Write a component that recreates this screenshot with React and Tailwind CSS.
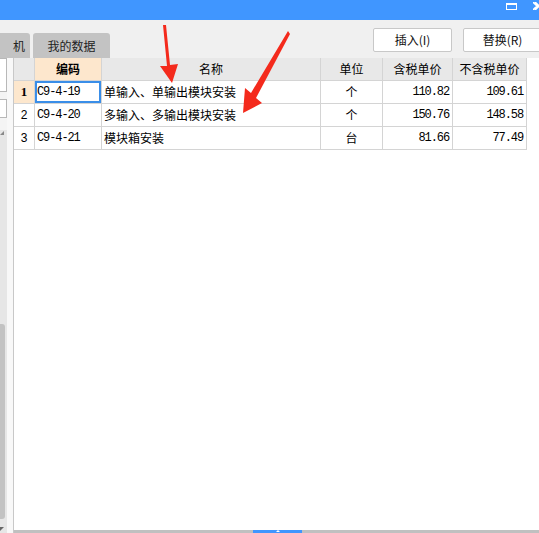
import React from "react";

const cjk = { fontFamily: '"Noto Sans CJK SC", "Liberation Sans", sans-serif' };

const rows = [
  { n: 1, code: "C9-4-19", name: "单输入、单输出模块安装", unit: "个", p1: "110.82", p2: "109.61" },
  { n: 2, code: "C9-4-20", name: "多输入、多输出模块安装", unit: "个", p1: "150.76", p2: "148.58" },
  { n: 3, code: "C9-4-21", name: "模块箱安装", unit: "台", p1: "81.66", p2: "77.49" },
];

const grid = "grid grid-cols-[21px_67px_219px_62px_70px_74px]";
const cell = "h-[23px] border-r border-b border-[#d4d4d4] flex items-center text-[12px] text-black";
const mono = "font-['Liberation_Mono',monospace] tracking-[-1.1px]";

const Arrows = () => (
  <svg className="absolute inset-0 pointer-events-none" width="539" height="533">
    <polygon
      fill="#f42a1c"
      points="163,25 166,25 170,65 178,64 172,83 160,66 167,66"
    />
    <polygon
      fill="#f42a1c"
      points="288,31 290,34 256,98 262,103 243,113 245,88 251,93"
    />
  </svg>
);

export default function App() {
  return (
    <div className="relative w-[539px] h-[533px] overflow-hidden bg-white flex flex-col" style={cjk}>
      {/* title bar */}
      <div className="h-[20px] bg-[#4096ff] flex items-start shrink-0">
        <div className="ml-auto mt-[3px] w-[11px] h-[7px] border-white border-x border-b border-t-2" />
        <svg className="ml-[16px] mt-[2px]" width="6" height="8" viewBox="0 0 6 8">
          <path d="M0 0 L4 4 L0 8 M2 0 L6 4 L2 8" stroke="#fff" strokeWidth="1.6" fill="none" />
        </svg>
      </div>

      {/* tabs + buttons */}
      <div className="h-[38px] bg-[#f0f0f0] flex items-end relative shrink-0">
        <div className="flex items-end gap-[3px] h-full">
          <div className="h-[25px] w-[30px] bg-[#c3c3c3] rounded-tr-[3px] flex items-center justify-end pr-[5px] text-[12px] text-[#222]">
            机
          </div>
          <div className="h-[25px] w-[77px] bg-[#c3c3c3] rounded-t-[3px] flex items-center justify-center text-[12px] text-[#222]">
            我的数据
          </div>
        </div>
        <div className="ml-auto self-start mt-[8px] flex gap-[11px] -mr-[3px]">
          <div className="w-[79px] h-[24px] bg-white border border-[#c8c8c8] rounded-[2px] flex items-center justify-center text-[12px] text-[#111]">
            插入(I)
          </div>
          <div className="w-[79px] h-[24px] bg-white border border-[#c8c8c8] rounded-[2px] flex items-center justify-center text-[12px] text-[#111]">
            替换(R)
          </div>
        </div>
      </div>

      {/* main */}
      <div className="flex-1 flex min-h-0">
        {/* left panel */}
        <div className="w-[13px] flex shrink-0">
          <div className="w-[7px] flex flex-col bg-[#f4f4f4]">
            <div className="h-[34px] bg-white border border-l-0 border-[#b8b8b8]" />
            <div className="h-[7px]" />
            <div className="h-[19px] bg-white border border-l-0 border-[#b8b8b8]" />
            <div className="flex-1 mt-[12px] bg-[#e6e6e6] flex flex-col relative">
              <div className="w-0 h-0 border-l-[4px] border-l-transparent border-b-[4px] border-b-[#888] mt-[1px]" />
              <div className="flex-1" />
              <div className="h-[195px] w-[5px] bg-[#c2c2c2] rounded-r-[3px] mb-[8px]" />
              <div className="w-0 h-0 border-l-[4px] border-l-[#666] border-b-[4px] border-b-transparent mb-[2px]" />
            </div>
          </div>
          <div className="flex-1 bg-[#f8f8f8]" />
        </div>

        {/* table area */}
        <div className="flex-1 flex flex-col border-l border-[#c8c8c8] min-w-0">
          <div className="flex-1 bg-white">
            <div className={`${grid} w-[513px]`}>
              <div className={`${cell} bg-[#e8e8e8]`} />
              <div className={`${cell} bg-[#fde7cd] justify-center font-bold`}>编码</div>
              <div className={`${cell} bg-[#e8e8e8] justify-center`}>名称</div>
              <div className={`${cell} bg-[#e8e8e8] justify-center`}>单位</div>
              <div className={`${cell} bg-[#e8e8e8] justify-center`}>含税单价</div>
              <div className={`${cell} bg-[#e8e8e8] justify-center`}>不含税单价</div>
              {rows.map((r) => (
                <React.Fragment key={r.n}>
                  <div
                    className={`${cell} justify-center ${
                      r.n === 1
                        ? "bg-[#fde7cd] font-bold font-['Liberation_Serif',serif] text-[13px]"
                        : "font-['Liberation_Sans',sans-serif]"
                    }`}
                  >
                    {r.n}
                  </div>
                  <div
                    className={`${cell} ${mono} pl-[2px] ${
                      r.n === 1 ? "shadow-[inset_0_0_0_2px_#3a8ee8]" : ""
                    }`}
                  >
                    {r.code}
                  </div>
                  <div className={`${cell} pl-[2px]`}>{r.name}</div>
                  <div className={`${cell} justify-center`}>{r.unit}</div>
                  <div className={`${cell} ${mono} justify-end pr-[3px]`}>{r.p1}</div>
                  <div className={`${cell} ${mono} justify-end pr-[3px]`}>{r.p2}</div>
                </React.Fragment>
              ))}
            </div>
          </div>
          {/* bottom scrollbar */}
          <div className="h-[3px] bg-[#c0c0c0] flex shrink-0">
            <div className="ml-[239px] w-[49px] h-full bg-[#4096ff] flex justify-center items-start">
              <div className="w-0 h-0 border-x-[2px] border-x-transparent border-b-[2px] border-b-white" />
            </div>
          </div>
        </div>
      </div>

      <Arrows />
    </div>
  );
}
